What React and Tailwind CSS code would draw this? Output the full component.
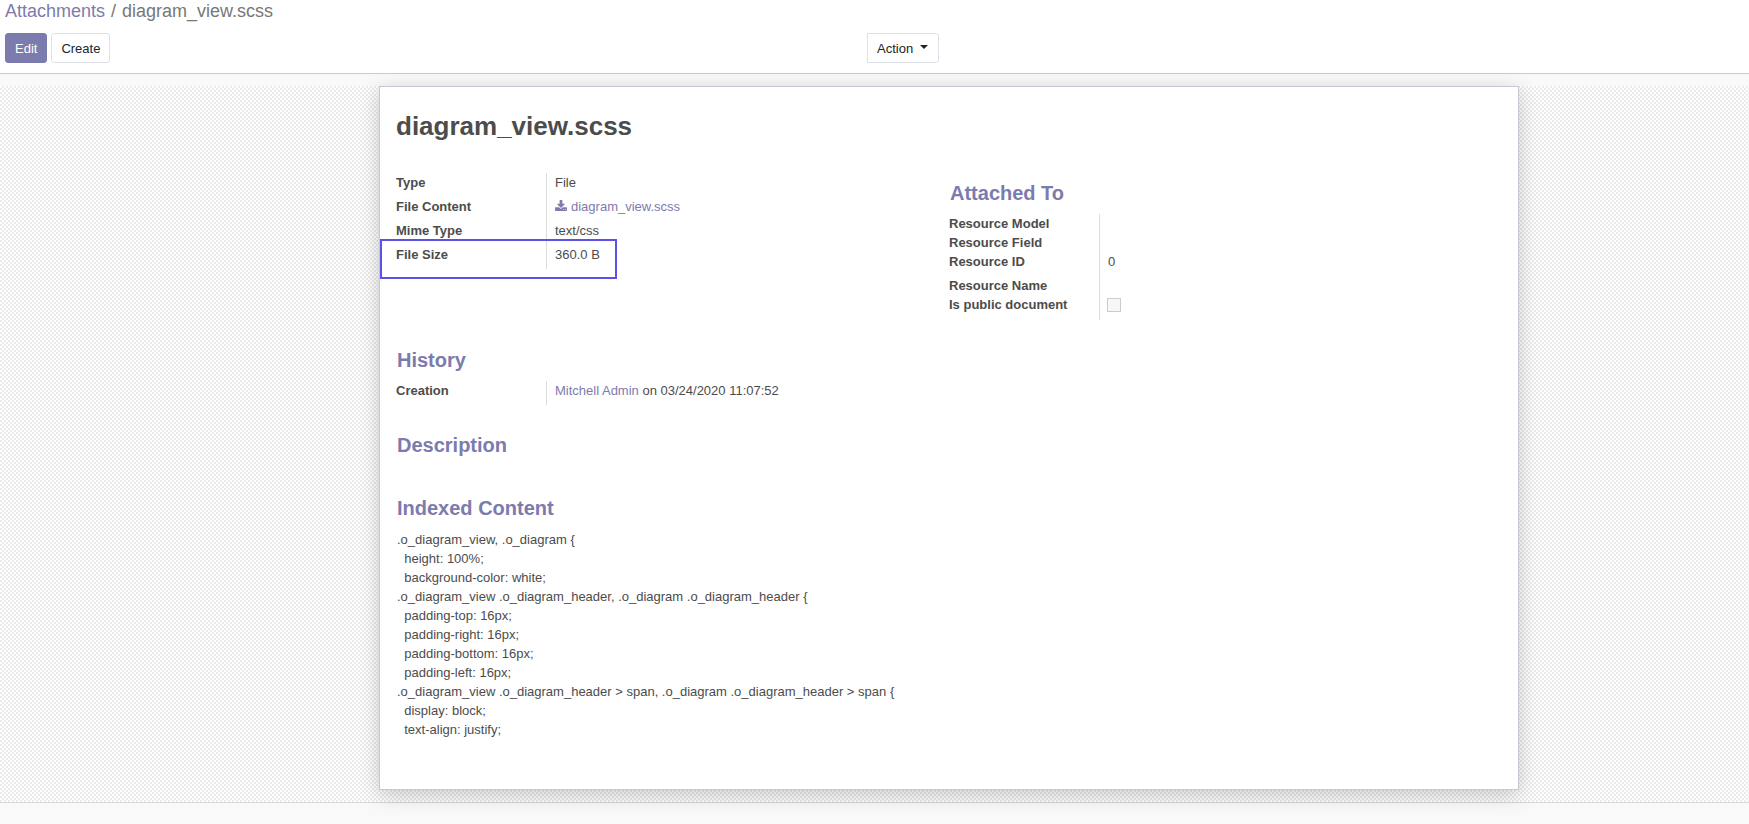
const indexedContent = `.o_diagram_view, .o_diagram {
  height: 100%;
  background-color: white;
.o_diagram_view .o_diagram_header, .o_diagram .o_diagram_header {
  padding-top: 16px;
  padding-right: 16px;
  padding-bottom: 16px;
  padding-left: 16px;
.o_diagram_view .o_diagram_header > span, .o_diagram .o_diagram_header > span {
  display: block;
  text-align: justify;`;

function SectionTitle({ children }) {
  return <h2 className="pl-px text-[20px] leading-6 font-bold text-[#7c7bad]">{children}</h2>;
}

function Field({ label, htmlFor, children, highlighted }) {
  return (
    <div className="relative grid grid-cols-[150px_1fr]">
      <dt className="font-bold">{htmlFor ? <label htmlFor={htmlFor}>{label}</label> : label}</dt>
      <dd className={`border-l border-[#dddddd] pl-2 ${children ? "pb-[5px]" : ""}`}>{children}</dd>
      {highlighted && (
        <div className="pointer-events-none absolute -top-1.5 -bottom-2.5 -left-4 w-[237px] border-2 border-[#5b50e8]" />
      )}
    </div>
  );
}

function DownloadIcon() {
  return (
    <svg viewBox="0 -128 1664 1536" className="mr-1 inline-block h-[11px] w-3 align-baseline" fill="currentColor" aria-hidden="true">
      <path d="M1280 1216q0-26-19-45t-45-19-45 19-19 45 19 45 45 19 45-19 19-45zm256 0q0-26-19-45t-45-19-45 19-19 45 19 45 45 19 45-19 19-45zm128-224v320q0 40-28 68t-68 28H96q-40 0-68-28t-28-68V992q0-40 28-68t68-28h465l135 136q58 56 136 56t136-56l136-136h464q40 0 68 28t28 68zm-325-569q17 41-14 70l-448 448q-18 19-45 19t-45-19L339 493q-31-29-14-70 17-39 59-39h256V-64q0-26 19-45t45-19h256q26 0 45 19t19 45v448h256q42 0 59 39z" />
    </svg>
  );
}

export default function App() {
  return (
    <div className="flex min-h-screen flex-col bg-[#f9f9f9] font-['Liberation_Sans',Arial,sans-serif] text-[13px] leading-[19px] text-[#4c4c4c]">
      <header className="border-b border-[#cacaca] bg-white pr-5 pb-2.5 pl-[5px]">
        <nav aria-label="Breadcrumb" className="pb-[11px] text-[18px] leading-[22px]">
          <ol className="flex gap-1.5 text-[#777777]">
            <li><a href="#attachments" className="text-[#7c7bad]">Attachments</a></li>
            <li aria-hidden="true">/</li>
            <li>diagram_view.scss</li>
          </ol>
        </nav>
        <div className="grid grid-cols-2">
          <div className="flex gap-1">
            <button type="button" className="h-[30px] rounded-[3px] border border-[#7c7bad] bg-[#7c7bad] px-[9px] text-white">Edit</button>
            <button type="button" className="h-[30px] rounded-[3px] border border-[#dee2e6] bg-white px-[9px] text-[#212529]">Create</button>
          </div>
          <div>
            <button type="button" className="flex h-[30px] items-center gap-[7px] rounded-r-[3px] border border-[#dee2e6] bg-white pr-2.5 pl-[9px] text-[#212529]">
              Action
              <svg viewBox="0 0 8 4" className="mb-0.5 h-1 w-2" fill="currentColor" aria-hidden="true"><path d="M0 0h8L4 4z" /></svg>
            </button>
          </div>
        </div>
      </header>

      <main className="mt-3 grid grid-cols-[379fr_minmax(0,1140px)_230fr] border-b border-[#d9d7d7] bg-[repeating-conic-gradient(#ebebeb_0_25%,#ffffff_0_50%)] bg-[size:4px_4px] pb-3">
        <article className="col-start-2 border border-[#c8c8d3] bg-white px-4 pt-[23px] pb-[50px] shadow-[0_5px_20px_0_rgba(0,0,0,0.2)]">
          <h1 className="text-[26px] leading-8 font-bold">diagram_view.scss</h1>

          <div className="mt-[31px] grid grid-cols-2">
            <dl>
              <Field label="Type">File</Field>
              <Field label="File Content">
                <a href="#download" className="text-[#7c7bad]"><DownloadIcon />diagram_view.scss</a>
              </Field>
              <Field label="Mime Type">text/css</Field>
              <Field label="File Size" highlighted>360.0 B</Field>
            </dl>
            <section className="pt-2">
              <SectionTitle>Attached To</SectionTitle>
              <dl className="mt-[9px]">
                <Field label="Resource Model" />
                <Field label="Resource Field" />
                <Field label="Resource ID">0</Field>
                <Field label="Resource Name" />
                <Field label="Is public document" htmlFor="is-public">
                  <input id="is-public" type="checkbox" disabled className="mt-[3px] mb-[3px] -ml-px block size-3.5 appearance-none border border-[#cccccc] bg-[#f7f7f7]" />
                </Field>
              </dl>
            </section>
          </div>

          <section className="mt-7 grid grid-cols-2">
            <div>
              <SectionTitle>History</SectionTitle>
              <dl className="mt-[9px]">
                <Field label="Creation">
                  <a href="#user" className="text-[#7c7bad]">Mitchell Admin</a> on 03/24/2020 11:07:52
                </Field>
              </dl>
            </div>
          </section>

          <section className="mt-7">
            <SectionTitle>Description</SectionTitle>
          </section>

          <section className="mt-[39px]">
            <SectionTitle>Indexed Content</SectionTitle>
            <p className="mt-2.5 pl-px whitespace-pre-wrap">{indexedContent}</p>
          </section>
        </article>
      </main>
    </div>
  );
}
